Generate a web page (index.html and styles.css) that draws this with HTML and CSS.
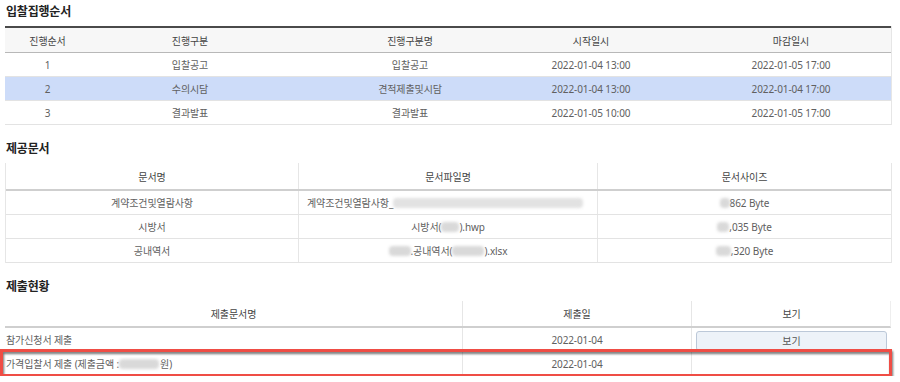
FILE: index.html
```html
<!DOCTYPE html>
<html lang="ko">
<head>
<meta charset="utf-8">
<link rel="stylesheet" href="styles.css">
</head>
<body>
<div class="page">
  <section class="sec sec-first">
    <h2 class="title">입찰집행순서</h2>
    <div class="tbl t1">
      <div class="row head">
        <div class="c">진행순서</div><div class="c">진행구분</div><div class="c">진행구분명</div><div class="c">시작일시</div><div class="c c-last">마감일시</div>
      </div>
      <div class="row">
        <div class="c">1</div><div class="c">입찰공고</div><div class="c">입찰공고</div><div class="c">2022-01-04 13:00</div><div class="c c-last">2022-01-05 17:00</div>
      </div>
      <div class="row sel">
        <div class="c">2</div><div class="c">수의시담</div><div class="c">견적제출및시담</div><div class="c">2022-01-04 13:00</div><div class="c c-last">2022-01-04 17:00</div>
      </div>
      <div class="row">
        <div class="c">3</div><div class="c">결과발표</div><div class="c">결과발표</div><div class="c">2022-01-05 10:00</div><div class="c c-last">2022-01-05 17:00</div>
      </div>
    </div>
  </section>

  <section class="sec">
    <h2 class="title">제공문서</h2>
    <div class="tbl t2">
      <div class="row head">
        <div class="c">문서명</div><div class="c">문서파일명</div><div class="c">문서사이즈</div>
      </div>
      <div class="row">
        <div class="c">계약조건및열람사항</div><div class="c left">계약조건및열람사항_<span class="blur b-long"></span></div><div class="c"><span class="blur b-s"></span>862 Byte</div>
      </div>
      <div class="row">
        <div class="c">시방서</div><div class="c">시방서(<span class="blur b-xs"></span>).hwp</div><div class="c"><span class="blur b-s2"></span>,035 Byte</div>
      </div>
      <div class="row">
        <div class="c">공내역서</div><div class="c"><span class="blur b-m"></span>.공내역서(<span class="blur b-m2"></span>).xlsx</div><div class="c"><span class="blur b-s3"></span>,320 Byte</div>
      </div>
    </div>
  </section>

  <section class="sec">
    <h2 class="title">제출현황</h2>
    <div class="tbl t3">
      <div class="row head">
        <div class="c">제출문서명</div><div class="c">제출일</div><div class="c">보기</div>
      </div>
      <div class="row">
        <div class="c left">참가신청서 제출</div><div class="c">2022-01-04</div><div class="c"><button class="btn">보기</button></div>
      </div>
      <div class="row marked">
        <div class="c left">가격입찰서 제출 (제출금액 : <span class="blur b-amt"></span>원)</div><div class="c">2022-01-04</div><div class="c"></div>
        <div class="highlight"></div>
      </div>
    </div>
  </section>
</div>
</body>
</html>
```

FILE: styles.css
```css
* { box-sizing: border-box; }
html, body { margin: 0; padding: 0; background: #fff; }
body {
  font-family: "Noto Sans", "Noto Sans CJK KR", sans-serif;
  font-size: 10px;
  color: #606060;
}
.page { padding: 2px 9px 0 5px; }
.sec { margin-top: 14px; }
.sec-first { margin-top: 0; }
.title {
  margin: 0 0 4px 1px;
  font-size: 12px;
  line-height: 20px;
  font-weight: 700;
  color: #222;
  letter-spacing: -0.2px;
}
.tbl { width: 886px; }
.row {
  display: grid;
  height: 24px;
  border-bottom: 1px solid #e3e3e3;
  align-items: center;
}
.c {
  text-align: center;
  white-space: nowrap;
  overflow: hidden;
  height: 100%;
  display: flex;
  align-items: center;
  justify-content: center;
  letter-spacing: -0.1px;
}
.c.left { justify-content: flex-start; padding-left: 2px; }

/* table 1 */
.t1 { box-shadow: 1px 0 0 #e6e6e6; }
.t1 .row { grid-template-columns: 85px 200px 240px 122px 239px; }
.t1 .c-last { padding-left: 39px; }
.t1 .head {
  height: 27px;
  border-top: 2px solid #4a4a4a;
  border-bottom: 1px solid #b8b8b8;
  background: #f7f7f7;
  color: #444;
}
.t1 .sel { background: #cddcf9; }

/* table 2 */
.t2 { border-left: 1px solid #e6e6e6; border-right: 1px solid #e6e6e6; width: 887px; }
.t2 .row { grid-template-columns: 292px 299px 294px; }
.t2 .c + .c { border-left: 1px solid #e6e6e6; }
.t2 .head { height: 28px; border-bottom: 2px solid #cfcfcf; color: #444; }
.t2 .c.left { padding-left: 8px; }

/* table 3 */
.t3 .row { grid-template-columns: 457px 229px 200px; }
.t3 .c + .c { border-left: 1px solid #e6e6e6; }
.t3 .head { height: 27px; border-bottom: 2px solid #cfcfcf; color: #444; border-right: 1px solid #eee; }
.t3 .c.left { padding-left: 1px; }
.marked { position: relative; }

.btn {
  width: 191px;
  height: 20px;
  margin-top: 2px;
  border: 1px solid #bcc8d8;
  border-radius: 3px;
  background: #edf2f8;
  font-family: inherit;
  font-size: 10px;
  color: #555;
  padding: 0;
}

.highlight {
  position: absolute;
  left: -5px;
  top: -3px;
  width: 892px;
  height: 28px;
  border: 3px solid #ef4d45;
  filter: drop-shadow(1px 2px 1px rgba(0, 0, 0, 0.55));
  pointer-events: none;
}

.blur {
  display: inline-block;
  height: 10px;
  background: #d9d9d9;
  border-radius: 4px;
  filter: blur(1.5px);
}
.b-long { width: 190px; background: #e2e2e2; }
.b-xs { width: 18px; }
.b-m { width: 22px; }
.b-m2 { width: 32px; }
.b-s { width: 10px; }
.b-s2 { width: 12px; }
.b-s3 { width: 15px; }
.b-amt { width: 40px; margin-right: 1px; }
```
